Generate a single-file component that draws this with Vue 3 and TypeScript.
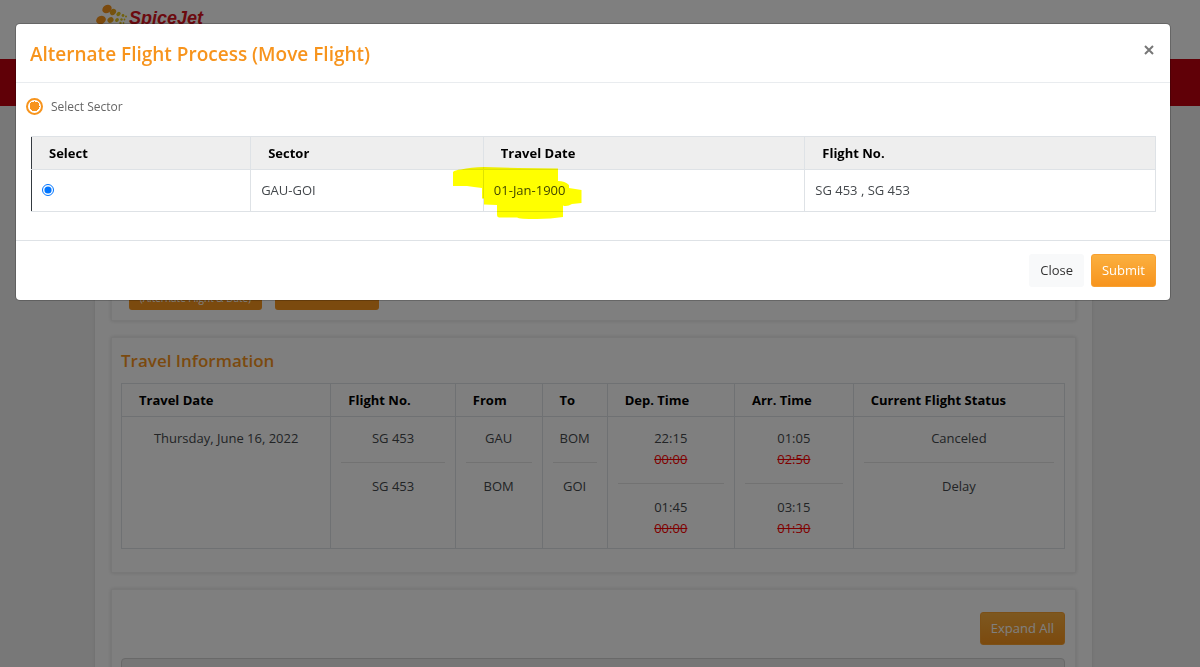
<script setup lang="ts">
import { ref } from 'vue'

interface Line {
  value: string
  struck?: string
}

interface Column {
  key: string
  title: string
  lines: Line[]
}

const columns: Column[] = [
  { key: 'date', title: 'Travel Date', lines: [{ value: 'Thursday, June 16, 2022' }] },
  { key: 'flight', title: 'Flight No.', lines: [{ value: 'SG 453' }, { value: 'SG 453' }] },
  { key: 'from', title: 'From', lines: [{ value: 'GAU' }, { value: 'BOM' }] },
  { key: 'to', title: 'To', lines: [{ value: 'BOM' }, { value: 'GOI' }] },
  {
    key: 'dep',
    title: 'Dep. Time',
    lines: [
      { value: '22:15', struck: '00:00' },
      { value: '01:45', struck: '00:00' },
    ],
  },
  {
    key: 'arr',
    title: 'Arr. Time',
    lines: [
      { value: '01:05', struck: '02:50' },
      { value: '03:15', struck: '01:30' },
    ],
  },
  { key: 'status', title: 'Current Flight Status', lines: [{ value: 'Canceled' }, { value: 'Delay' }] },
]

const mode = ref('sector')
const sector = ref('GAU-GOI')
</script>

<template>
  <div class="page" inert>
    <header class="masthead">
      <div class="wrap logo">
        <svg class="logo-mark" width="34" height="30" viewBox="0 0 34 30">
          <g fill="#f7941d">
            <ellipse cx="12" cy="9" rx="5" ry="4" transform="rotate(-35 12 9)" />
            <ellipse cx="6" cy="20" rx="5" ry="4" transform="rotate(-25 6 20)" />
          </g>
          <g fill="#eba51c">
            <ellipse cx="18" cy="12" rx="3.4" ry="2.8" transform="rotate(-45 18 12)" />
            <ellipse cx="15.5" cy="20" rx="3.2" ry="2.7" transform="rotate(-35 15.5 20)" />
          </g>
          <g fill="#e3c41c">
            <ellipse cx="23.5" cy="14" rx="2.4" ry="1.9" transform="rotate(-45 23.5 14)" />
            <ellipse cx="22" cy="20" rx="2.1" ry="1.7" transform="rotate(-45 22 20)" />
            <circle cx="28" cy="15.5" r="1.4" />
            <circle cx="31" cy="16.5" r="1" />
            <circle cx="26.5" cy="19.5" r="1.2" />
            <circle cx="29.5" cy="19.5" r="0.9" />
            <circle cx="25.5" cy="23" r="1.2" />
            <circle cx="28.5" cy="23" r="0.9" />
          </g>
        </svg>
        <span class="logo-name">SpiceJet</span>
      </div>
    </header>
    <div class="red-bar"></div>

    <main class="wrap sheet">
      <section class="panel actions">
        <button type="button" class="btn flat first">(Alternate Flight &amp; Date)</button>
        <button type="button" class="btn flat second"></button>
      </section>

      <section class="panel travel">
        <h2>Travel Information</h2>
        <table class="grid">
          <colgroup>
            <col v-for="c in columns" :key="c.key" :class="'c-' + c.key" />
          </colgroup>
          <thead>
            <tr>
              <th v-for="c in columns" :key="c.key" scope="col">{{ c.title }}</th>
            </tr>
          </thead>
          <tbody>
            <tr>
              <td v-for="c in columns" :key="c.key">
                <template v-for="(line, i) in c.lines" :key="i">
                  <hr v-if="i > 0" />
                  <div>{{ line.value }}</div>
                  <div v-if="line.struck"><s>{{ line.struck }}</s></div>
                </template>
              </td>
            </tr>
          </tbody>
        </table>
      </section>

      <section class="panel passengers">
        <button type="button" class="btn primary">Expand All</button>
        <div class="accordion"></div>
      </section>
    </main>
  </div>

  <div class="backdrop">
    <div class="modal" role="dialog" aria-modal="true" aria-labelledby="modal-title">
      <div class="modal-head">
        <h1 id="modal-title">Alternate Flight Process (Move Flight)</h1>
        <button type="button" class="close" aria-label="Close">
          <svg width="10" height="10" viewBox="0 0 10 10">
            <path d="M1 1L9 9M9 1L1 9" stroke="#777" stroke-width="2" fill="none" />
          </svg>
        </button>
      </div>

      <div class="modal-body">
        <label class="mode">
          <input v-model="mode" type="radio" name="mode" value="sector" />
          <span>Select Sector</span>
        </label>

        <table class="grid sectors">
          <colgroup>
            <col class="s-select" />
            <col class="s-sector" />
            <col class="s-date" />
            <col class="s-flight" />
          </colgroup>
          <thead>
            <tr>
              <th scope="col">Select</th>
              <th scope="col">Sector</th>
              <th scope="col">Travel Date</th>
              <th scope="col">Flight No.</th>
            </tr>
          </thead>
          <tbody>
            <tr>
              <td>
                <input v-model="sector" type="radio" name="sector" value="GAU-GOI" aria-labelledby="sector-name" />
              </td>
              <td id="sector-name">GAU-GOI</td>
              <td class="marked">
                01-Jan-1900
                <svg class="marker" width="129" height="53" viewBox="0 0 129 53" aria-hidden="true">
                  <path
                    fill="#ffff00"
                    d="M0 6Q2 4 8 3.500Q18 1 31 1L65 2L105 2.500V15Q112 15 116 19V22L128.500 24V37L119 38Q114 41 110 39.500V51Q98 53 84 53Q66 53 64 51.500H46Q44 51 44 49V39L31 38.500V32.500H29V22L21 21L14 20H0Z"
                  />
                </svg>
              </td>
              <td>SG 453 , SG 453</td>
            </tr>
          </tbody>
        </table>
      </div>

      <div class="modal-foot">
        <button type="button" class="btn light">Close</button>
        <button type="button" class="btn primary">Submit</button>
      </div>
    </div>
  </div>
</template>

<style>
html,
body,
#app {
  height: 100%;
}

body {
  margin: 0;
  overflow: hidden;
  background: #f0f0f0;
}
</style>

<style scoped>
.page,
.backdrop {
  font: 13px/21px 'Open Sans', 'Noto Sans', sans-serif;
  color: #44484c;
  box-sizing: border-box;
}

.page *,
.backdrop * {
  box-sizing: border-box;
}

.page {
  height: 100%;
  overflow: hidden;
}

.wrap {
  width: calc(100% - 203px);
  margin-left: 95px;
}

.masthead {
  height: 59px;
  background: #fff;
}

.logo {
  display: flex;
  align-items: flex-start;
}

.logo-name {
  padding-top: 8px;
  font: italic bold 18px/20px 'Liberation Sans', Arial, sans-serif;
  color: #d9141e;
}

.red-bar {
  height: 47px;
  background: #c0000f;
}

.sheet {
  display: flex;
  flex-direction: column;
  gap: 16px;
  padding: 16px;
  background: #fff;
  box-shadow: 0 0 3px rgba(0, 0, 0, 0.1);
}

.panel {
  border: 1px solid #f0f0f0;
  box-shadow: 0 0 4px rgba(0, 0, 0, 0.14);
  background: #fff;
}

.actions {
  display: flex;
  align-items: flex-end;
  gap: 13px;
  height: 199px;
  padding: 10px 17px;
}

.travel {
  padding: 9px 10px 23px 9px;
}

h1,
h2 {
  margin: 0;
  font-weight: 600;
  color: #f7941d;
}

h2 {
  padding-bottom: 8px;
  font-size: 17px;
  line-height: 28px;
}

.grid {
  width: 100%;
  table-layout: fixed;
  border-collapse: collapse;
}

.grid th,
.grid td {
  border: 1px solid #dee2e6;
}

.grid th {
  padding: 6px 17px 5px;
  text-align: left;
  font-weight: 700;
  color: #000;
}

.grid td {
  padding: 10px;
  vertical-align: top;
}

.travel td {
  padding: 11px 10px 9px;
  text-align: center;
}

.travel hr {
  margin: 13px 0;
  border: 0;
  border-top: 1px solid #e5e5e5;
}

.travel s {
  color: #f00;
}

.c-date { width: 22.2%; }
.c-flight { width: 13.2%; }
.c-from { width: 9.2%; }
.c-to { width: 6.9%; }
.c-dep { width: 13.5%; }
.c-arr { width: 12.6%; }

.passengers {
  display: flex;
  flex-direction: column;
  align-items: flex-end;
  gap: 13px;
  padding: 22px 10px 10px 9px;
}

.accordion {
  width: 100%;
  height: 40px;
  border: 1px solid #d2d2d2;
  border-radius: 4px 4px 0 0;
  background: #ececec;
}

.btn {
  height: 33px;
  padding: 0 10px;
  border: 1px solid transparent;
  border-radius: 3px;
  font: inherit;
  color: #fff;
  cursor: pointer;
}

.primary {
  border-color: #f9a02f;
  background: linear-gradient(#fbb040, #f7941d);
}

.light {
  background: #f8f9fa;
  color: #333;
}

.flat {
  display: flex;
  align-items: flex-end;
  justify-content: center;
  height: 52px;
  background: #f7941d;
}

.first {
  width: 133px;
  padding: 0;
  font-size: 10px;
}

.second {
  width: 104px;
}

.backdrop {
  position: fixed;
  inset: 0;
  padding: 24px 30px 0 16px;
  background: rgba(0, 0, 0, 0.5);
}

.modal {
  border-radius: 4px;
  background: #fff;
  box-shadow: 0 0 0 1px rgba(0, 0, 0, 0.2);
}

.modal-head {
  display: flex;
  align-items: center;
  justify-content: space-between;
  height: 59px;
  padding: 2px 16px 0 14px;
  border-bottom: 1px solid #e9ecef;
}

h1 {
  font-size: 19px;
  line-height: 28px;
}

.close {
  display: flex;
  margin-bottom: 8px;
  padding: 0;
  border: 0;
  background: none;
  cursor: pointer;
}

.modal-body {
  padding: 13px 14px 28px 15px;
}

.mode {
  display: flex;
  align-items: center;
  gap: 8px;
  width: fit-content;
  margin: 0 0 19px -5px;
  font-size: 12px;
  color: #666;
}

.mode input {
  appearance: none;
  width: 17px;
  height: 17px;
  margin: 0;
  border: 2px solid #f7941d;
  border-radius: 50%;
}

.mode input:checked {
  background: radial-gradient(circle, #f7941d 5px, #fff 5px) padding-box no-repeat;
}

.sectors {
  border-left: 1px solid #343a40;
}

.sectors th {
  background: #eee;
}

.sectors th:first-child,
.sectors td:first-child {
  border-left-color: #343a40;
}

.sectors td input {
  display: block;
  width: 12px;
  height: 12px;
  margin: 4px 0;
}

.s-select { width: 19.5%; }
.s-sector { width: 20.7%; }
.s-date { width: 28.6%; }

.marked {
  position: relative;
}

.marker {
  position: absolute;
  left: -31px;
  top: -4px;
  mix-blend-mode: multiply;
  pointer-events: none;
}

.modal-foot {
  display: flex;
  justify-content: flex-end;
  gap: 7px;
  padding: 13px 14px 13px 13px;
  border-top: 1px solid #dee2e6;
}
</style>
